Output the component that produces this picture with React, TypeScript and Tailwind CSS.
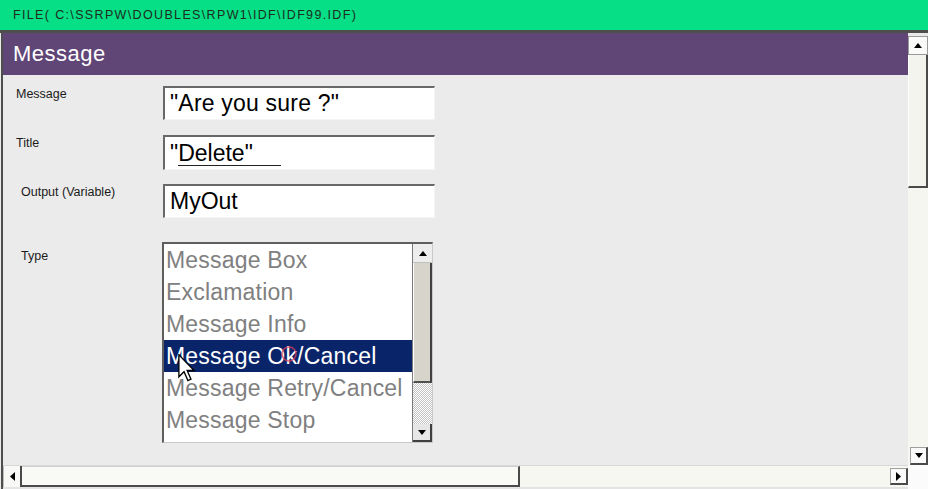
import React from "react";

const Up = ({ s = 8 }: { s?: number }) => (
  <svg width={s} height={s / 2 + 1} viewBox="0 0 8 5"><polygon points="0,5 8,5 4,0" fill="#000" /></svg>
);
const Down = ({ s = 8 }: { s?: number }) => (
  <svg width={s} height={s / 2 + 1} viewBox="0 0 8 5"><polygon points="0,0 8,0 4,5" fill="#000" /></svg>
);
const Left = () => (
  <svg width="5" height="9" viewBox="0 0 5 9"><polygon points="5,0 5,9 0,4.5" fill="#000" /></svg>
);
const Right = () => (
  <svg width="5" height="9" viewBox="0 0 5 9"><polygon points="0,0 0,9 5,4.5" fill="#000" /></svg>
);

const items = [
  "Message Box",
  "Exclamation",
  "Message Info",
  "Message Ok/Cancel",
  "Message Retry/Cancel",
  "Message Stop",
];

export default function App() {
  return (
    <div
      className="w-[928px] h-[489px] flex flex-col bg-[#ebebeb] overflow-hidden"
      style={{ fontFamily: '"Liberation Sans", Arial, sans-serif' }}
    >
      <div className="h-[30px] shrink-0 bg-[#06df86] pl-[13px] flex items-center text-[12.5px] tracking-[1.35px] text-[#1d2d1d]">
        FILE( C:\SSRPW\DOUBLES\RPW1\IDF\IDF99.IDF)
      </div>
      <div className="flex-1 flex border-t-[3px] border-[#4e4e4e] min-h-0">
        {/* main column */}
        <div className="flex-1 flex flex-col ml-[1px] border-l-2 border-[#4e4e4e] min-w-0">
          <div className="h-[42px] shrink-0 bg-[#5f4677] text-white text-[22px] tracking-[0.5px] pl-[10px] pb-[2px] flex items-center">
            Message
          </div>
          <div className="flex-1 flex flex-col pl-[13px] pt-[11px] text-[#1a1a1a]">
            <div className="flex">
              <div className="w-[147px] text-[12.5px] leading-[15px] pt-[1px]">Message</div>
              <div className="w-[272px] h-[34px] bg-white border-t-2 border-l-2 border-[#686868] border-b border-r border-b-[#f4f4f4] border-r-[#f4f4f4] flex items-center pl-[5px] text-[23px] tracking-[0.2px] text-black">
                "Are you sure ?"
              </div>
            </div>
            <div className="flex mt-[15px]">
              <div className="w-[147px] text-[12.5px] leading-[15px] pt-[1px]">Title</div>
              <div className="w-[272px] h-[35px] bg-white border-t-2 border-l-2 border-[#686868] border-b border-r border-b-[#f4f4f4] border-r-[#f4f4f4] flex items-center pl-[5px] text-[23px] text-black">
                "<span className="inline-block w-[103px] leading-[24px] border-b border-[#222]">Delete"</span>
              </div>
            </div>
            <div className="flex mt-[14px]">
              <div className="w-[147px] pl-[5px] text-[12.5px] leading-[15px] pt-[1px]">Output (Variable)</div>
              <div className="w-[272px] h-[34px] bg-white border-t-2 border-l-2 border-[#686868] border-b border-r border-b-[#f4f4f4] border-r-[#f4f4f4] flex items-center pl-[5px] text-[23px] text-black">
                MyOut
              </div>
            </div>
            <div className="flex mt-[24px]">
              <div className="w-[146px] pl-[5px] text-[12.5px] leading-[15px] pt-[7px]">Type</div>
              <div className="relative w-[271px] h-[201px] bg-white border-t-2 border-l-2 border-[#5e5e5e] border-b border-r border-b-[#c9c9c9] border-r-[#c9c9c9] flex">
                <div className="flex-1 flex flex-col">
                  {items.map((it, i) => (
                    <div
                      key={it}
                      className={
                        "h-[32px] leading-[32px] pl-[2px] text-[23px] tracking-[0.2px] whitespace-nowrap " +
                        (i === 3 ? "bg-[#0a246a] text-white" : "text-[#808080]")
                      }
                    >
                      {it}
                    </div>
                  ))}
                </div>
                <div className="w-[20px] flex flex-col border-l border-[#7a7a7a]">
                  <div className="h-[19px] bg-[#ededed] flex items-center justify-center border-b border-[#c0c0c0]">
                    <Up />
                  </div>
                  <div className="h-[120px] bg-[#d7d4cc] border-l border-l-white border-r-2 border-r-[#404040] border-b-2 border-b-[#505050]" />
                  <div className="flex-1 bg-[repeating-conic-gradient(#c4c4c4_0%_25%,#ffffff_0%_50%)] bg-[length:2px_2px]" />
                  <div className="h-[18px] bg-[#e6e6e6] flex items-center justify-center border-r-2 border-b-2 border-[#404040]">
                    <Down />
                  </div>
                </div>
                {/* click indicator */}
                <svg className="absolute left-[116px] top-[101px]" width="18" height="18" viewBox="0 0 18 18">
                  <circle cx="9" cy="9" r="7" fill="none" stroke="#e0405a" strokeOpacity="0.75" strokeWidth="1.6" />
                </svg>
                {/* mouse cursor */}
                <svg className="absolute left-[14px] top-[110px]" width="18" height="28" viewBox="0 0 12 19">
                  <path d="M0.5 0.5 L0.5 15.5 L4 12 L6.6 18 L8.7 17.1 L6.1 11.2 L10.8 11.2 Z" fill="#fff" stroke="#000" strokeWidth="0.9" strokeLinejoin="miter" />
                </svg>
              </div>
            </div>
          </div>
          {/* horizontal scrollbar */}
          <div className="h-[22px] shrink-0 flex bg-[#f7f7f2] border-t border-[#d8d8d8]">
            <div className="w-[19px] bg-[#f8f8f6] border-l border-[#bdbdbd] border-r-2 border-r-[#4a4a4a] flex items-center justify-center">
              <Left />
            </div>
            <div className="w-[498px] bg-[#f9f9f5] border-r-2 border-b-2 border-[#4a4a4a] border-t border-t-[#cfcfcf]" />
            <div className="flex-1" />
            <div className="w-[18px] my-[2px] bg-[#fafafa] border border-[#a0a0a0] border-r-2 border-b-2 border-r-[#4a4a4a] border-b-[#4a4a4a] flex items-center justify-center">
              <Right />
            </div>
          </div>
          <div className="h-[2px] shrink-0 bg-[#e4e4e4]" />
        </div>
        {/* vertical scrollbar */}
        <div className="w-[20px] flex flex-col bg-[#f7f7f3]">
          <div className="h-[3px] bg-[#e8e8e8]" />
          <div className="h-[19px] bg-[#fafaf8] border border-[#9a9a9a] flex items-center justify-center">
            <Up />
          </div>
          <div className="h-[133px] bg-[#f4f4ef] border-l border-l-white border-r-2 border-b-2 border-[#4a4a4a]" />
          <div className="h-[259px] bg-[#f6f6f1]" />
          <div className="h-[18px] ml-[2px] bg-[#fafafa] border border-[#a0a0a0] border-r-2 border-b-2 border-r-[#4a4a4a] border-b-[#4a4a4a] flex items-center justify-center">
            <Down />
          </div>
          <div className="flex-1 bg-[#fbfbfb]" />
        </div>
      </div>
    </div>
  );
}
